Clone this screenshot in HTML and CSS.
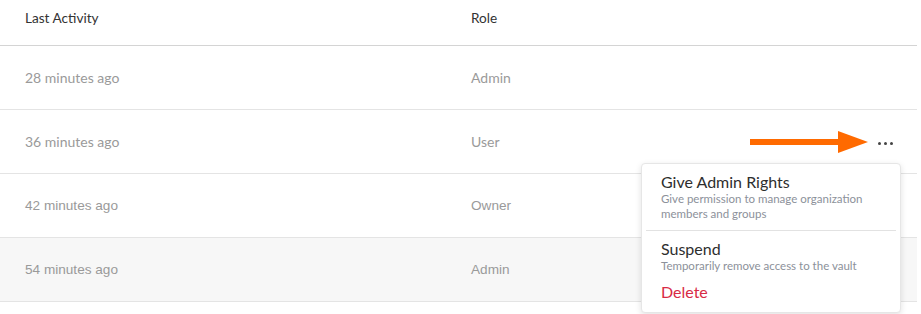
FILE: index.html
```html
<!DOCTYPE html>
<html>
<head>
<meta charset="utf-8">
<link rel="stylesheet" href="styles.css">
</head>
<body>
<div class="table">
  <div class="row head">
    <div class="cell">Last Activity</div>
    <div class="cell">Role</div>
    <div class="cell actions"></div>
  </div>
  <div class="row">
    <div class="cell">28 minutes ago</div>
    <div class="cell">Admin</div>
    <div class="cell actions"></div>
  </div>
  <div class="row open">
    <div class="cell">36 minutes ago</div>
    <div class="cell">User</div>
    <div class="cell actions">
      <svg class="arrow" width="120" height="24" viewBox="0 0 120 24"><rect x="0" y="8" width="92" height="6" fill="#ff6a00"/><polygon points="88,0 118,11 88,22" fill="#ff6a00"/></svg>
      <span class="dots"><i></i><i></i><i></i></span>
    </div>
    <div class="menu">
      <div class="item first">
        <div class="title">Give Admin Rights</div>
        <div class="desc">Give permission to manage organization members and groups</div>
      </div>
      <div class="sep"></div>
      <div class="item mid">
        <div class="title">Suspend</div>
        <div class="desc">Temporarily remove access to the vault</div>
      </div>
      <div class="item last">
        <div class="title danger">Delete</div>
      </div>
    </div>
  </div>
  <div class="row alt">
    <div class="cell">42 minutes ago</div>
    <div class="cell">Owner</div>
    <div class="cell actions"></div>
  </div>
  <div class="row alt shade">
    <div class="cell">54 minutes ago</div>
    <div class="cell">Admin</div>
    <div class="cell actions"></div>
  </div>
</div>
</body>
</html>
```
FILE: styles.css
```css
html, body {
  margin: 0;
  padding: 0;
  background: #fff;
}
body {
  font-family: Lato, "Noto Sans", sans-serif;
  width: 921px;
  height: 314px;
  overflow: hidden;
}
.table {
  width: 917px;
}
.row {
  position: relative;
  display: grid;
  grid-template-columns: 446px 1fr 60px;
  align-items: center;
  height: 63px;
  padding-left: 25px;
  border-bottom: 1px solid #e4e4e4;
  font-size: 14px;
  color: #9a9a9a;
}
.row.head {
  height: 37px;
  padding-top: 8px;
  align-items: start;
  font-size: 13.6px;
  color: #333;
  border-bottom-color: #d4d4d4;
}
.row.alt {
  font-family: "Liberation Sans", Arial, sans-serif;
  font-size: 13.6px;
}
.row.shade {
  background: #f7f7f7;
}
.cell {
  line-height: 20px;
}
.actions {
  display: flex;
  justify-content: flex-end;
  align-items: center;
  padding-right: 24px;
  position: relative;
}
.arrow {
  position: absolute;
  right: 47px;
  top: -8px;
}
.dots {
  display: flex;
  gap: 3px;
  margin-top: 3px;
}
.dots i {
  display: block;
  width: 3px;
  height: 3px;
  border-radius: 50%;
  background: #444;
}
.menu {
  position: absolute;
  left: 641px;
  top: 53px;
  width: 258px;
  background: #fff;
  border: 1px solid #e6e6e6;
  border-radius: 4px;
  box-shadow: 0 2px 6px rgba(0,0,0,0.12);
  z-index: 5;
  font-family: Lato, "Noto Sans", sans-serif;
}
.item {
  padding: 0 20px 0 19px;
}
.item.first { padding-top: 8px; padding-bottom: 9px; }
.item.mid { padding-top: 8px; padding-bottom: 6px; }
.item.last { padding-top: 3px; padding-bottom: 11px; }
.title {
  font-size: 16px;
  line-height: 19px;
  color: #2e2e2e;
}
.title.danger {
  color: #d82a45;
}
.desc {
  font-size: 11.5px;
  line-height: 15px;
  color: #8c919a;
}
.sep {
  height: 1px;
  background: #e2e2e2;
  margin: 0 4px;
}
```
